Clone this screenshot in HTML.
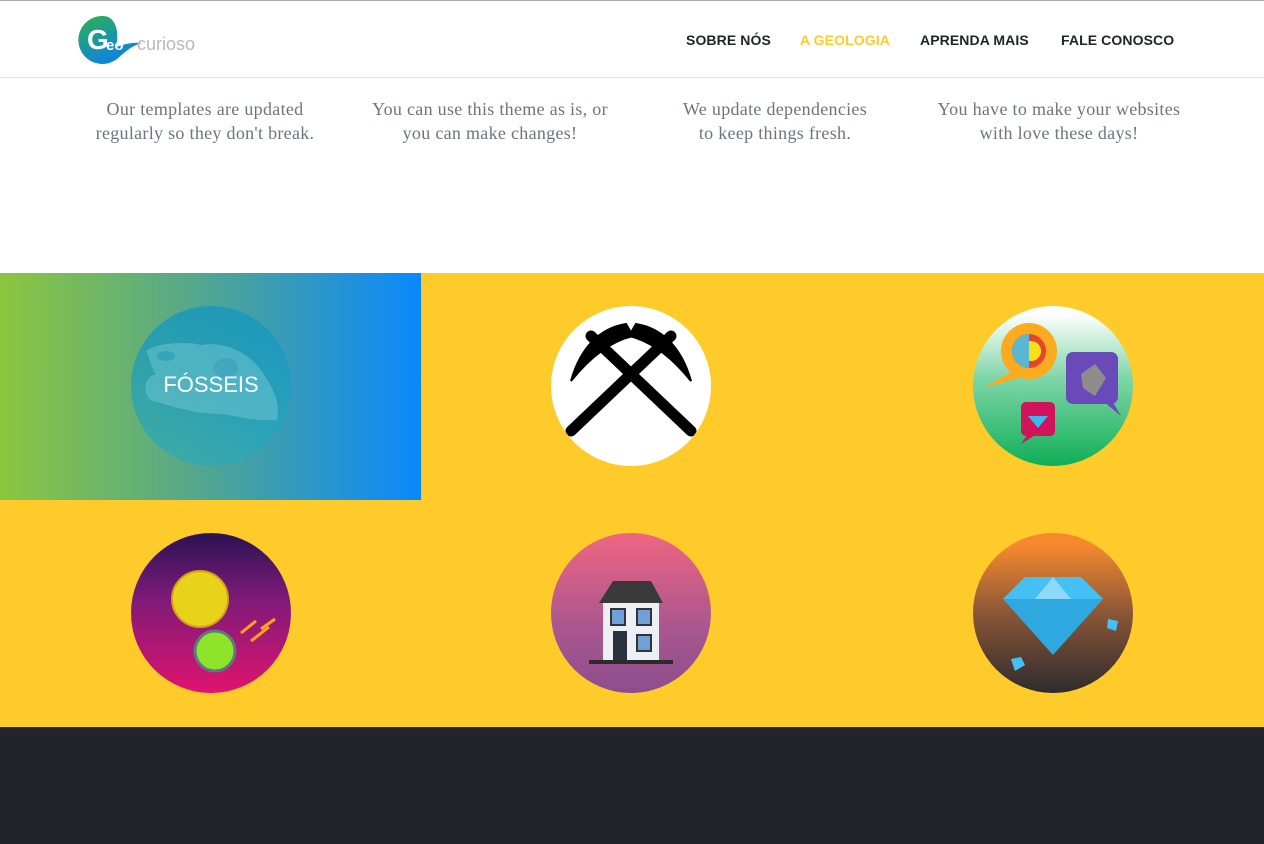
<!DOCTYPE html>
<html><head><meta charset="utf-8"><style>
*{margin:0;padding:0;box-sizing:border-box}
body{width:1264px;height:844px;overflow:hidden;background:#fff;position:relative;font-family:"Liberation Sans",sans-serif}
.nav{position:absolute;top:0;left:0;width:1264px;height:78px;background:#fff;border-top:1px solid #aaa;border-bottom:1px solid #e5e5e5;z-index:5}
.nav a{position:absolute;top:31px;font-size:14px;font-weight:bold;letter-spacing:0.1px;color:#212529;text-decoration:none}
.col{position:absolute;top:97px;text-align:center;font-family:"Liberation Serif",serif;font-size:18px;letter-spacing:0.3px;line-height:24px;color:#6c757d}
.grid{position:absolute;top:273px;left:0;width:1264px;height:454px;background:#fecb2a}
.c{position:absolute;width:160px;height:160px;border-radius:50%;overflow:hidden}
.foot{position:absolute;top:727px;left:0;width:1264px;height:117px;background:#212529}
</style></head><body>
<div class="nav">
  <svg style="position:absolute;left:78px;top:14px" width="66" height="50" viewBox="0 0 66 50">
    <defs><linearGradient id="lg" x1="0" y1="0" x2="0.6" y2="1"><stop offset="0" stop-color="#2bb24c"/><stop offset="1" stop-color="#0b7ff0"/></linearGradient></defs>
    <path d="M25 1a24 24 0 1 0 14 43c8-7 14-13 25-16c-12-1-20 2-26 4C42 16 37 1 25 1z" fill="url(#lg)"/>
    <text x="9" y="34" font-family="Liberation Sans" font-weight="bold" font-size="28" fill="#fff">G</text>
    <text x="28" y="35" font-family="Liberation Sans" font-weight="bold" font-size="15" fill="#fff">eo</text>
  </svg>
  <span style="position:absolute;left:137px;top:33px;font-size:18px;color:#b9b9b9">curioso</span>
  <a style="left:686px">SOBRE NÓS</a>
  <a style="left:800px;color:#fecb2a">A GEOLOGIA</a>
  <a style="left:920px">APRENDA MAIS</a>
  <a style="left:1061px">FALE CONOSCO</a>
</div>
<div class="col" style="left:90px;width:230px">Our templates are updated regularly so they don't break.</div>
<div class="col" style="left:362px;width:256px">You can use this theme as is, or you can make changes!</div>
<div class="col" style="left:675px;width:200px">We update dependencies to keep things fresh.</div>
<div class="col" style="left:929px;width:260px">You have to make your websites with love these days!</div>
<div class="grid">
  <div style="position:absolute;left:0;top:0;width:421px;height:227px;background:linear-gradient(90deg,#8cc63f,#56a88a 45%,#0a88fd)"></div>
  <div class="c" style="left:131px;top:33px;background:linear-gradient(180deg,rgba(20,150,190,0.8),rgba(40,170,190,0.6))">
    <svg width="160" height="160" viewBox="0 0 160 160"><path d="M15 45c10-8 40-10 55-6c20-4 45 5 60 25c10 15 20 30 16 50c-20 2-40-4-55-6c-30 0-50-8-72-14c-8-10-6-22 6-26c-6-8-6-16-10-23z" fill="#6cc3cf" opacity="0.55"/><ellipse cx="35" cy="50" rx="9" ry="5" fill="#2a99b5" opacity="0.6"/><ellipse cx="95" cy="62" rx="12" ry="10" fill="#3aa0bc" opacity="0.6"/></svg>
    <div style="position:absolute;left:0;top:66px;width:160px;text-align:center;color:#fff;font-size:22px">FÓSSEIS</div>
  </div>
  <div class="c" style="left:551px;top:33px;background:#fff">
    <svg width="160" height="160" viewBox="0 0 160 160" stroke="#000" stroke-linecap="round" fill="none">
      <path d="M40 30L140 125" stroke-width="11"/><path d="M120 30L20 125" stroke-width="11"/>
      <path d="M20 75C30 40 50 22 75 18L82 30C60 35 40 50 20 75z" fill="#000" stroke-width="2"/>
      <path d="M140 75C130 40 110 22 85 18L78 30C100 35 120 50 140 75z" fill="#000" stroke-width="2"/>
    </svg>
  </div>
  <div class="c" style="left:973px;top:33px;background:linear-gradient(180deg,#fff 5%,#7fd6a8 45%,#0fae57)">
    <svg width="160" height="160" viewBox="0 0 160 160">
      <circle cx="56" cy="45" r="28" fill="#fbab1d"/><path d="M40 65L10 82L52 70z" fill="#fbab1d"/>
      <circle cx="56" cy="45" r="17" fill="#e7432e"/><circle cx="58" cy="45" r="10" fill="#f7e217"/><path d="M56 28a17 17 0 0 0 0 34z" fill="#5ab6d3"/>
      <rect x="93" y="46" width="52" height="52" rx="7" fill="#6a4ab8"/><path d="M130 95L148 110L135 88z" fill="#6a4ab8"/>
      <path d="M108 68L122 58L133 72L122 90L110 82z" fill="#8d8d8d"/>
      <rect x="48" y="96" width="34" height="34" rx="5" fill="#d0135a"/><path d="M55 128L48 138L64 128z" fill="#d0135a"/>
      <path d="M55 110L75 110L65 122z" fill="#3ab9ef"/>
    </svg>
  </div>
  <div class="c" style="left:131px;top:260px;background:linear-gradient(180deg,#2a1253,#7c1a78 40%,#e0146f)">
    <svg width="160" height="160" viewBox="0 0 160 160"><circle cx="69" cy="66" r="28" fill="#e8d21a" stroke="#d4a015" stroke-width="2"/><circle cx="84" cy="118" r="20" fill="#8ee42a" stroke="#5a7a80" stroke-width="3"/><path d="M110 100l15-12M120 108l18-14M130 96l14-10" stroke="#f9a31b" stroke-width="3"/></svg>
  </div>
  <div class="c" style="left:551px;top:260px;background:linear-gradient(180deg,#ef6582,#a9568e 60%,#8c4e8e)">
    <svg width="160" height="160" viewBox="0 0 160 160"><path d="M48 70L62 48H100L112 70z" fill="#3a3a3a"/><rect x="52" y="70" width="56" height="58" fill="#eceff3"/><rect x="60" y="76" width="14" height="16" fill="#6fa0d8" stroke="#333" stroke-width="2"/><rect x="86" y="76" width="14" height="16" fill="#6fa0d8" stroke="#333" stroke-width="2"/><rect x="62" y="98" width="14" height="30" fill="#2b3340"/><rect x="86" y="102" width="14" height="16" fill="#6fa0d8" stroke="#333" stroke-width="2"/><rect x="38" y="127" width="84" height="4" fill="#2b2b2b"/></svg>
  </div>
  <div class="c" style="left:973px;top:260px;background:linear-gradient(180deg,#f5892e 8%,#8b5636 50%,#2e2b2e)">
    <svg width="160" height="160" viewBox="0 0 160 160"><path d="M30 66L52 44H108L130 66L80 122z" fill="#2ea8df"/><path d="M52 44H108L130 66H30z" fill="#44c0f5"/><path d="M62 66L80 44L98 66z" fill="#8bd9fb"/><path d="M135 86l10 2l-2 10l-9-3z" fill="#44c0f5"/><path d="M38 126l10-2l4 8l-10 6z" fill="#44c0f5"/></svg>
  </div>
</div>
<div class="foot"></div>
</body></html>
